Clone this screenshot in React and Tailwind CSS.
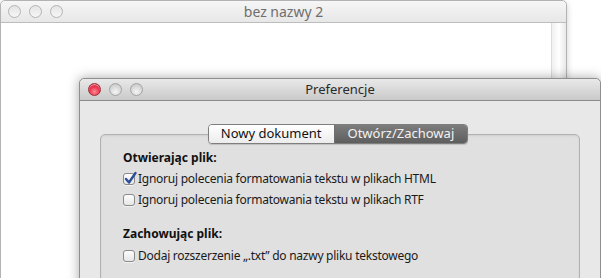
import React from 'react';

const font = { fontFamily: '"Noto Sans", "Lucida Grande", sans-serif' };

const Light = ({ color }) => {
  if (color === 'red') {
    return (
      <span className="block w-[13px] h-[13px] rounded-full border border-[#9e2b36] bg-[radial-gradient(circle_at_50%_70%,#ff8a96_0%,#e8304a_55%,#b51c30_100%)] shadow-[inset_0_1px_1px_rgba(255,255,255,0.6)]" />
    );
  }
  return (
    <span className="block w-[13px] h-[13px] rounded-full border border-[#a4a4a4] bg-[radial-gradient(circle_at_50%_70%,#f4f4f4_0%,#d6d6d6_60%,#bdbdbd_100%)]" />
  );
};

const Hollow = () => (
  <span className="block w-[13px] h-[13px] rounded-full border border-[#b4b4b4] bg-[linear-gradient(#e4e4e4,#f6f6f6)]" />
);

const Checkbox = ({ checked }) => (
  <span className="relative flex-none w-[12px] h-[12px] rounded-[3px] border border-[#8a8a8a] bg-[linear-gradient(#fdfdfd,#e6e6e6)] shadow-[0_1px_0_rgba(255,255,255,0.6)]">
    {checked && (
      <svg className="absolute -left-[1px] -top-[3px]" width="15" height="15" viewBox="0 0 15 15">
        <path d="M3 8 L6 11.5 L12.5 2" fill="none" stroke="#2c4f9a" strokeWidth="2.4" strokeLinecap="round" strokeLinejoin="round" />
      </svg>
    )}
  </span>
);

const Option = ({ checked, children }) => (
  <div className="flex items-center gap-[3px] h-[20px]">
    <Checkbox checked={checked} />
    <span className="text-[12px] tracking-[-0.25px] text-[#1a1a1a]">{children}</span>
  </div>
);

export default function App() {
  return (
    <div className="relative w-[601px] h-[278px] overflow-hidden bg-white" style={font}>
      {/* back window */}
      <div className="absolute left-0 top-0 w-[567px] h-[320px] rounded-t-[5px] border border-[#b3b3b3] bg-white shadow-[0_2px_6px_rgba(0,0,0,0.2)]">
        <div className="relative flex items-center h-[22px] px-[6px] rounded-t-[5px] border-b border-[#bdbdbd] bg-[linear-gradient(#f6f6f6,#e7e7e7)]">
          <div className="flex gap-[8px] pl-[1px]">
            <Hollow />
            <Hollow />
            <Hollow />
          </div>
          <div className="absolute inset-0 flex items-center justify-center text-[14px] text-[#6e6e6e]">bez nazwy 2</div>
        </div>
        <div className="flex justify-end">
          <div className="w-[15px] h-[60px] border-l border-[#dcdcdc] bg-[linear-gradient(90deg,#f0f0f0,#ffffff_50%,#e8e8e8)]" />
        </div>
      </div>

      {/* front window */}
      <div className="absolute left-[79px] top-[78px] w-[522px] h-[220px] rounded-t-[5px] border border-[#8f8f8f] bg-[#e8e8e8] shadow-[0_0_12px_rgba(0,0,0,0.35)]">
        <div className="relative flex items-center h-[22px] px-[8px] rounded-t-[5px] border-b border-[#8a8a8a] bg-[linear-gradient(#e9e9e9,#c9c9c9)]">
          <div className="flex gap-[8px]">
            <Light color="red" />
            <Light />
            <Light />
          </div>
          <div className="absolute inset-0 flex items-center justify-center text-[13px] text-[#2a2a2a]">Preferencje</div>
        </div>

        <div className="px-[20px] pt-[23px]">
          <div className="relative">
            <div className="flex justify-center pr-[4px] relative z-10">
              <div className="flex h-[20px] rounded-[4px] border border-[#7e7e7e] overflow-hidden shadow-[0_1px_1px_rgba(0,0,0,0.15)]">
                <div className="flex items-center px-[12px] bg-[linear-gradient(#ffffff,#ececec)] text-[13px] text-[#111] border-r border-[#6e6e6e]">Nowy dokument</div>
                <div className="flex items-center px-[13px] bg-[linear-gradient(#7c7c7c,#5e5e5e)] text-[13px] text-[#f2f2f2]">Otwórz/Zachowaj</div>
              </div>
            </div>
            <div className="-mt-[10px] h-[200px] rounded-[5px] border border-[#b2b2b2] bg-[#e0e0e0] shadow-[inset_0_1px_2px_rgba(0,0,0,0.08)] pl-[22px] pt-[14px]">
              <div className="text-[12px] font-bold text-[#111] h-[20px]">Otwierając plik:</div>
              <Option checked>Ignoruj polecenia formatowania tekstu w plikach HTML</Option>
              <div className="mt-[1px]">
                <Option>Ignoruj polecenia formatowania tekstu w plikach RTF</Option>
              </div>
              <div className="text-[12px] font-bold text-[#111] h-[21px] mt-[15px]">Zachowując plik:</div>
              <Option>Dodaj rozszerzenie „.txt” do nazwy pliku tekstowego</Option>
            </div>
          </div>
        </div>
      </div>
    </div>
  );
}
